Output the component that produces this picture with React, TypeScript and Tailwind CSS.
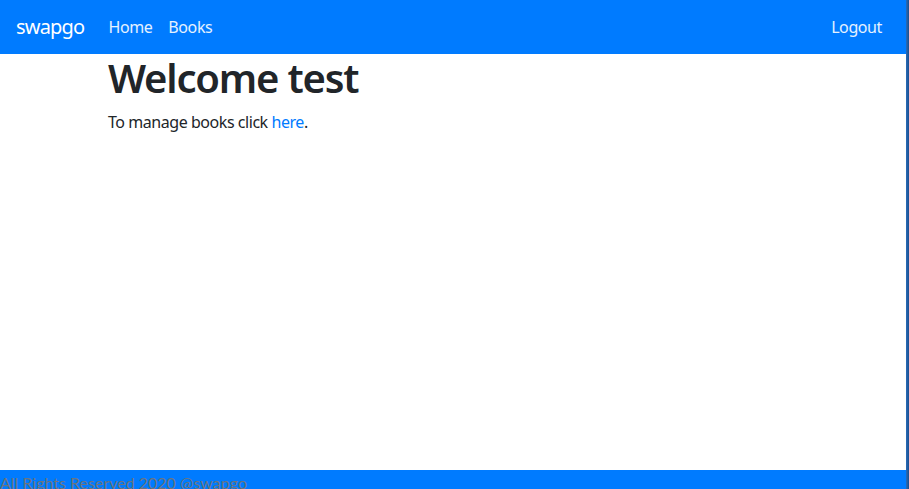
export default function App() {
  return (
    <div className="h-[489px] w-[909px] overflow-hidden flex bg-white" style={{ fontFamily: '"Noto Sans", "Open Sans", sans-serif' }}>
      <div className="flex-1 flex flex-col min-w-0">
        <nav className="h-[54px] bg-[#007bff] flex items-center px-4 shrink-0">
          <span className="text-[20px] text-white mr-4 leading-[30px] tracking-[-0.8px]">swapgo</span>
          <a className="text-[16px] text-white/90 px-2 leading-6 tracking-[-0.4px]">Home</a>
          <a className="text-[16px] text-white/90 px-2 leading-6 tracking-[-0.4px]">Books</a>
          <div className="flex-1" />
          <a className="text-[16px] text-white/90 px-2 leading-6 tracking-[-0.4px]">Logout</a>
        </nav>
        <main className="h-[416px] shrink-0">
          <div className="w-[720px] mx-auto px-[15px] text-[#212529]">
            <h1 className="text-[40px] font-semibold leading-[48px] mb-2 tracking-[-1.2px]">Welcome test</h1>
            <p className="text-[16px] leading-6 tracking-[-0.45px]">
              To manage books click <a className="text-[#007bff]">here</a>.
            </p>
          </div>
        </main>
        <footer className="h-[40px] bg-[#007bff] shrink-0">
          <p className="text-[16px] leading-6 text-[#6c757d] pt-[1px]" style={{ fontFamily: 'Lato, sans-serif' }}>All Rights Reserved 2020 @swapgo</p>
        </footer>
      </div>
      <div className="w-[3px] h-full bg-gradient-to-r from-[#2a6cb8] to-[#1a4f8f] shrink-0" />
    </div>
  );
}
